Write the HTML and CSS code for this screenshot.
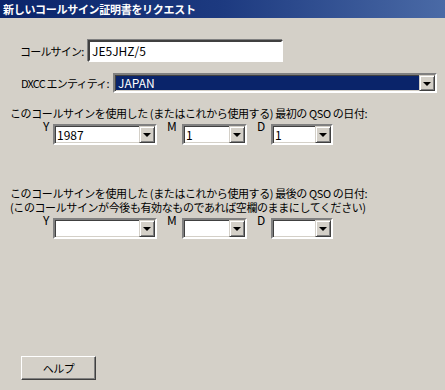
FILE: index.html
```html
<!DOCTYPE html>
<html lang="ja">
<head>
    <meta charset="UTF-8">
    <meta name="viewport" content="width=device-width, initial-scale=1.0">
    <title>新しいコールサイン証明書をリクエスト</title>
    <link rel="stylesheet" href="styles.css">
</head>
<body>
    <div class="titlebar">新しいコールサイン証明書をリクエスト</div>

    <div class="form">
        <div class="field-row callsign-row">
            <label class="field-label">コールサイン:</label>
            <div class="textbox callsign-box">JE5JHZ/5</div>
        </div>

        <div class="field-row dxcc-row">
            <label class="field-label">DXCC エンティティ:</label>
            <div class="combo combo-wide combo-selected">
                <span class="combo-value">JAPAN</span>
                <span class="combo-button"><span class="arrow"></span></span>
            </div>
        </div>

        <p class="caption first-caption">このコールサインを使用した (またはこれから使用する) 最初の QSO の日付:</p>
        <div class="date-row">
            <span class="date-label label-y">Y</span>
            <div class="combo combo-year">
                <span class="combo-value">1987</span>
                <span class="combo-button"><span class="arrow"></span></span>
            </div>
            <span class="date-label label-m">M</span>
            <div class="combo combo-month">
                <span class="combo-value">1</span>
                <span class="combo-button"><span class="arrow"></span></span>
            </div>
            <span class="date-label label-d">D</span>
            <div class="combo combo-day">
                <span class="combo-value">1</span>
                <span class="combo-button"><span class="arrow"></span></span>
            </div>
        </div>

        <p class="caption last-caption">このコールサインを使用した (またはこれから使用する) 最後の QSO の日付:<br>(このコールサインが今後も有効なものであれば空欄のままにしてください)</p>
        <div class="date-row">
            <span class="date-label label-y">Y</span>
            <div class="combo combo-year">
                <span class="combo-value"></span>
                <span class="combo-button"><span class="arrow"></span></span>
            </div>
            <span class="date-label label-m">M</span>
            <div class="combo combo-month">
                <span class="combo-value"></span>
                <span class="combo-button"><span class="arrow"></span></span>
            </div>
            <span class="date-label label-d">D</span>
            <div class="combo combo-day">
                <span class="combo-value"></span>
                <span class="combo-button"><span class="arrow"></span></span>
            </div>
        </div>

        <button class="help-btn">ヘルプ</button>
    </div>
</body>
</html>
```

FILE: styles.css
```css
body {
    margin: 0;
    width: 445px;
    height: 390px;
    overflow: hidden;
    background-color: #d4d0c8;
    font-family: "Noto Sans CJK JP", sans-serif;
    font-size: 11px;
    color: #000;
}

.titlebar {
    height: 18px;
    line-height: 18px;
    padding-left: 3px;
    font-weight: bold;
    font-size: 11px;
    letter-spacing: -0.3px;
    color: #fff;
    background: linear-gradient(to right, #0a246a 0%, #1d3a80 50%, #4a6aa6 100%);
    white-space: nowrap;
}

.form {
    padding: 22px 0 0 0;
}

.field-row {
    display: flex;
    align-items: center;
}

.field-label {
    white-space: nowrap;
    letter-spacing: -0.8px;
}

.callsign-row {
    padding-left: 20px;
    height: 22px;
}

.callsign-row .field-label {
    width: 68px;
}

.textbox {
    box-sizing: border-box;
    height: 22px;
    background: #fff;
    border-top: 2px solid #404040;
    border-left: 2px solid #404040;
    border-right: 2px solid #fff;
    border-bottom: 2px solid #fff;
    box-shadow: -1px -1px 0 #808080, 1px 1px 0 #d4d0c8;
    padding: 0 2px;
    line-height: 18px;
    font-size: 12px;
}

.callsign-box {
    width: 195px;
}

.dxcc-row {
    margin-top: 11px;
    padding-left: 21px;
    height: 20px;
}

.dxcc-row .field-label {
    width: 92px;
}

.combo {
    box-sizing: border-box;
    display: flex;
    height: 20px;
    background: #fff;
    border-top: 2px solid #808080;
    border-left: 2px solid #808080;
    border-right: 2px solid #fff;
    border-bottom: 2px solid #fff;
    box-shadow: inset 1px 1px 0 #404040, inset -1px -1px 0 #d4d0c8;
}

.combo-value {
    flex: 1;
    padding: 0 2px;
    line-height: 17px;
    font-size: 12px;
    white-space: nowrap;
}

.combo-wide {
    width: 324px;
}

.combo-selected .combo-value {
    background: #0a246a;
    color: #fff;
    margin: 1px 0 1px 1px;
    line-height: 14px;
}

.combo-button {
    box-sizing: border-box;
    width: 16px;
    height: 16px;
    background: #d4d0c8;
    border-top: 1px solid #d4d0c8;
    border-left: 1px solid #d4d0c8;
    border-right: 1px solid #404040;
    border-bottom: 1px solid #404040;
    box-shadow: inset 1px 1px 0 #fff, inset -1px -1px 0 #808080;
    display: flex;
    align-items: center;
    justify-content: center;
}

.arrow {
    width: 0;
    height: 0;
    border-left: 4px solid transparent;
    border-right: 4px solid transparent;
    border-top: 4px solid #000;
    margin-top: 1px;
}

.caption {
    margin: 0;
    padding-left: 10px;
    line-height: 14px;
    letter-spacing: -0.4px;
    white-space: nowrap;
}

.first-caption {
    margin-top: 13px;
}

.last-caption {
    margin-top: 41px;
}

.date-row {
    display: flex;
    align-items: flex-start;
    padding-left: 43px;
    margin-top: 4px;
}

.date-label {
    font-size: 12px;
    line-height: 10px;
    margin-top: -3px;
}

.label-y {
    width: 10px;
}

.label-m {
    width: 15px;
    margin-left: 10px;
}

.label-d {
    width: 14px;
    margin-left: 10px;
}

.combo-year {
    width: 104px;
    height: 21px;
}

.combo-month {
    width: 65px;
    height: 21px;
}

.combo-day {
    width: 62px;
    height: 21px;
}

.combo-year .combo-button,
.combo-month .combo-button,
.combo-day .combo-button {
    height: 17px;
}

.help-btn {
    display: block;
    box-sizing: border-box;
    width: 75px;
    height: 24px;
    margin: 117px 0 0 21px;
    padding: 0;
    font-family: "Noto Sans CJK JP", sans-serif;
    font-size: 11px;
    letter-spacing: -0.5px;
    color: #000;
    background: #d4d0c8;
    border-top: 1px solid #fff;
    border-left: 1px solid #fff;
    border-right: 1px solid #404040;
    border-bottom: 1px solid #404040;
    box-shadow: inset -1px -1px 0 #808080;
}
```
